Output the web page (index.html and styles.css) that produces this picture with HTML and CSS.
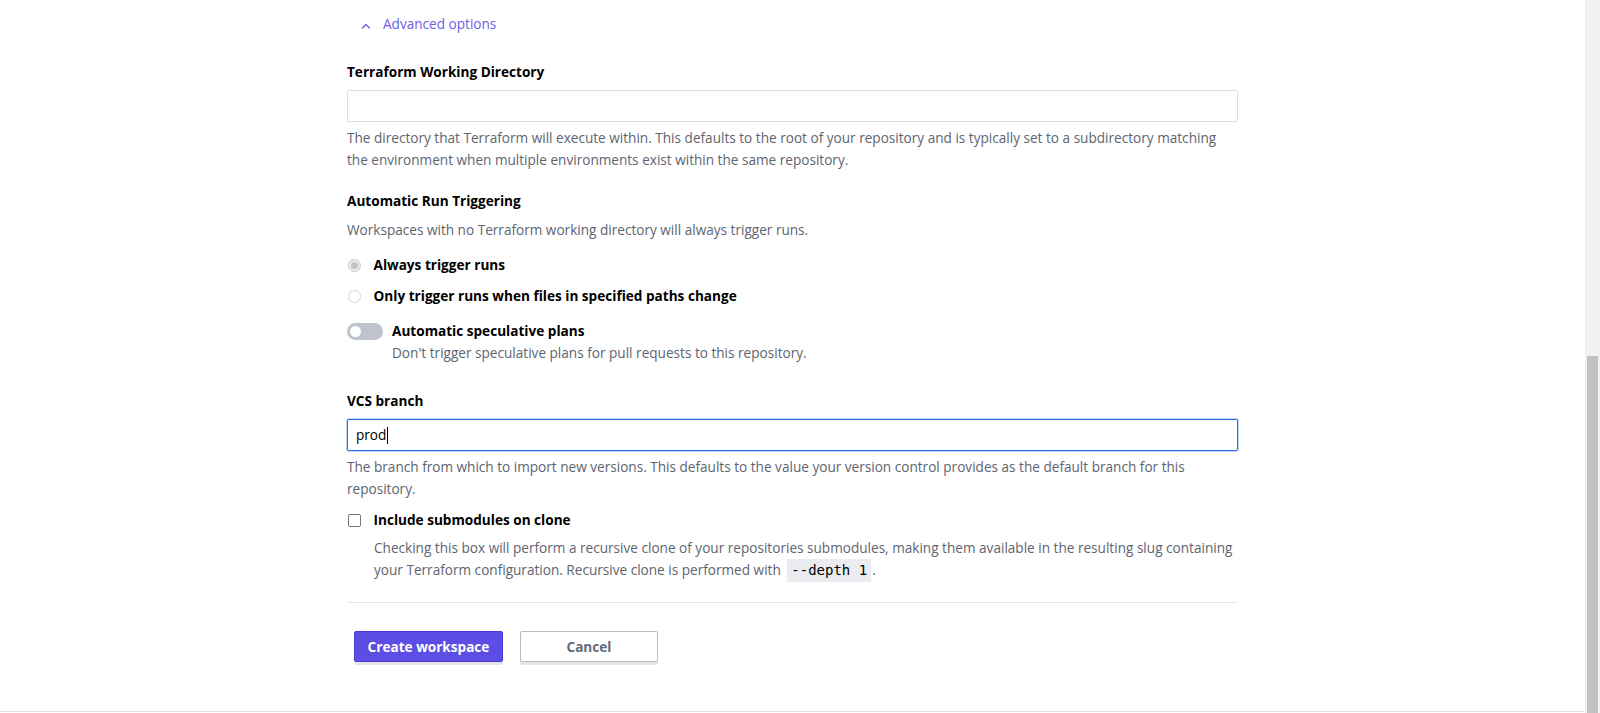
FILE: index.html
```html
<!DOCTYPE html>
<html lang="en">
<head>
<meta charset="utf-8">
<title>Create workspace</title>
<link rel="stylesheet" href="styles.css">
</head>
<body>
<div class="page">
  <main class="main">
    <div class="content">
      <div class="adv">
        <svg class="chev" width="10" height="6" viewBox="0 0 10 6"><polyline points="1.5,5 5,1.5 8.5,5" fill="none" stroke="#6a5ee8" stroke-width="1.3" stroke-linecap="round" stroke-linejoin="round"/></svg>
        <span>Advanced options</span>
      </div>

      <div class="field">
        <label class="label">Terraform Working Directory</label>
        <input class="input" type="text">
        <p class="help">The directory that Terraform will execute within. This defaults to the root of your repository and is typically set to a subdirectory matching the environment when multiple environments exist within the same repository.</p>
      </div>

      <div class="section">
        <div class="label">Automatic Run Triggering</div>
        <p class="help help-tight">Workspaces with no Terraform working directory will always trigger runs.</p>
        <div class="radios">
          <div class="radio-row"><span class="radio radio-on"></span><span class="opt">Always trigger runs</span></div>
          <div class="radio-row"><span class="radio"></span><span class="opt">Only trigger runs when files in specified paths change</span></div>
        </div>
        <div class="toggle-row">
          <span class="toggle"><span class="knob"></span></span>
          <div class="toggle-text">
            <div class="opt">Automatic speculative plans</div>
            <div class="help-line">Don't trigger speculative plans for pull requests to this repository.</div>
          </div>
        </div>
      </div>

      <div class="field field-vcs">
        <label class="label">VCS branch</label>
        <div class="input input-focus"><span>prod</span><span class="caret"></span></div>
        <p class="help">The branch from which to import new versions. This defaults to the value your version control provides as the default branch for this repository.</p>
        <div class="check-row"><span class="checkbox"></span><span class="opt">Include submodules on clone</span></div>
        <p class="help help-indent">Checking this box will perform a recursive clone of your repositories submodules, making them available in the resulting slug containing your Terraform configuration. Recursive clone is performed with <code>--depth 1</code>.</p>
      </div>

      <div class="actions">
        <button class="btn btn-primary">Create workspace</button>
        <button class="btn btn-secondary">Cancel</button>
      </div>
    </div>
  </main>
  <div class="scrollbar"><div class="thumb"></div></div>
</div>
</body>
</html>
```
FILE: styles.css
```css
html, body {
  margin: 0;
  padding: 0;
  background: #fff;
}
body {
  font-family: "Open Sans", "Noto Sans", sans-serif;
  font-size: 13.6px;
  line-height: 22px;
  color: #000;
}
.page {
  display: flex;
  height: 713px;
  overflow: hidden;
}
.main {
  flex: 1;
  box-sizing: border-box;
  height: 712px;
  border-bottom: 1px solid #e2e2e8;
}
.content {
  width: 891px;
  margin: 0 auto;
  padding-top: 13px;
}
.adv {
  display: flex;
  align-items: center;
  height: 22px;
  color: #6a5ee8;
  padding-left: 14px;
}
.chev {
  margin-right: 12px;
  margin-top: 4px;
}
.field {
  margin-top: 26px;
}
.label {
  display: block;
  font-weight: 700;
  color: #000;
}
.input {
  display: block;
  box-sizing: border-box;
  width: 100%;
  height: 32px;
  margin: 7px 0 0;
  padding: 0 8px;
  border: 1px solid #dcdce2;
  border-radius: 2px;
  background: #fff;
  font: inherit;
  color: #000;
  outline: none;
}
.input-focus {
  display: flex;
  align-items: center;
  border-color: #2c6fe6;
  box-shadow: 0 0 0 1px rgba(44, 111, 230, 0.3);
}
.caret {
  display: inline-block;
  width: 1px;
  height: 17px;
  background: #000;
  margin-left: 1px;
}
.help {
  margin: 5px 0 0;
  color: #5e6470;
}
.section {
  margin-top: 19px;
}
.help-tight {
  margin-top: 7px;
}
.radios {
  display: flex;
  flex-direction: column;
  gap: 9px;
  margin-top: 13px;
}
.radio-row, .check-row {
  display: flex;
  align-items: center;
  height: 22px;
}
.opt {
  font-weight: 700;
  color: #000;
}
.radio {
  box-sizing: border-box;
  width: 13px;
  height: 13px;
  border-radius: 50%;
  border: 1px solid #d4d4d4;
  background: #fff;
  margin: 1px 13px 0 0.5px;
  flex: none;
  display: flex;
  align-items: center;
  justify-content: center;
}
.radio-on {
  background: #ececec;
  border-color: #c6c6c6;
}
.radio-on::after {
  content: "";
  width: 7px;
  height: 7px;
  border-radius: 50%;
  background: #c2c2c2;
}
.toggle-row {
  display: flex;
  align-items: flex-start;
  margin-top: 13px;
}
.toggle {
  box-sizing: border-box;
  width: 36px;
  height: 17px;
  border-radius: 9px;
  background: #bfc3cb;
  margin-top: 3px;
  margin-right: 9px;
  padding: 3px;
  flex: none;
  display: flex;
  align-items: center;
}
.knob {
  width: 11px;
  height: 11px;
  border-radius: 50%;
  background: #fff;
}
.help-line {
  color: #5e6470;
}
.field-vcs {
  margin-top: 26px;
}
.check-row {
  margin-top: 9px;
}
.checkbox {
  box-sizing: border-box;
  width: 13px;
  height: 13px;
  border: 1px solid #767676;
  border-radius: 2px;
  background: #fff;
  margin: 1px 13px 0 0.5px;
  flex: none;
}
.help-indent {
  margin: 6px 0 0;
  padding-left: 27px;
}
code {
  font-family: "DejaVu Sans Mono", "Liberation Mono", monospace;
  font-size: 14px;
  line-height: 1;
  color: #000;
  background: #eaecf0;
  padding: 3px 4px 4px;
  margin: 0 1px 0 3px;
}
.actions {
  margin-top: 21px;
  border-top: 1px solid #e6e6ea;
  padding: 28px 0 0 7px;
  display: flex;
  gap: 17px;
}
.btn {
  box-sizing: border-box;
  height: 31px;
  border-radius: 2px;
  font-family: inherit;
  font-size: 13.6px;
  font-weight: 700;
  box-shadow: 0 3px 0 #e6e6ea;
  cursor: pointer;
}
.btn-primary {
  width: 149px;
  background: #5c4ee5;
  border: 1px solid #4a3cd8;
  color: #fff;
}
.btn-secondary {
  width: 138px;
  background: #fff;
  border: 1px solid #babdc6;
  color: #656b77;
}
.scrollbar {
  width: 15px;
  flex: none;
  height: 713px;
  background: #f1f1f1;
  border-left: 1px solid #ececec;
  box-sizing: border-box;
  padding: 356px 2px 0 1px;
}
.thumb {
  height: 400px;
  background: #c1c1c1;
}
```
